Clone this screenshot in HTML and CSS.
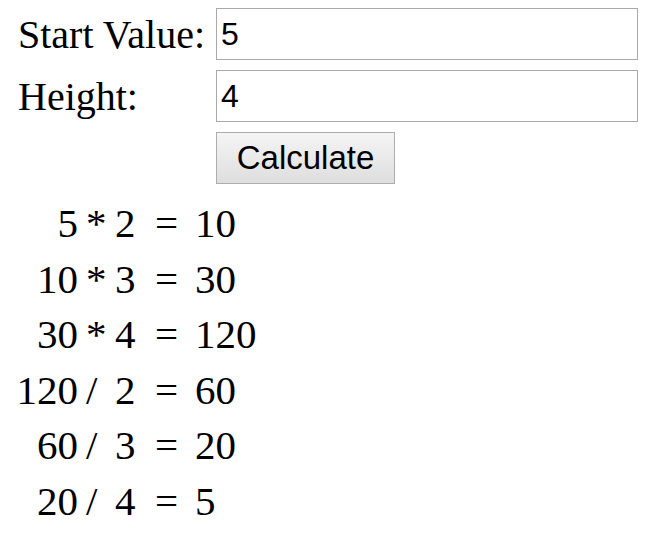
FILE: index.html
```html
<!DOCTYPE html>
<html>
<head>
<meta charset="utf-8">
<link rel="stylesheet" href="styles.css">
</head>
<body>
<form class="form">
  <label class="label" for="start">Start Value:</label>
  <input class="field" id="start" type="text" value="5">
  <label class="label" for="height">Height:</label>
  <input class="field" id="height" type="text" value="4">
  <button class="btn" type="button">Calculate</button>
</form>
<div class="results">
  <span class="a">5</span><span class="op">*</span><span class="b">2</span><span class="eq">=</span><span class="r">10</span>
  <span class="a">10</span><span class="op">*</span><span class="b">3</span><span class="eq">=</span><span class="r">30</span>
  <span class="a">30</span><span class="op">*</span><span class="b">4</span><span class="eq">=</span><span class="r">120</span>
  <span class="a">120</span><span class="op">/</span><span class="b">2</span><span class="eq">=</span><span class="r">60</span>
  <span class="a">60</span><span class="op">/</span><span class="b">3</span><span class="eq">=</span><span class="r">20</span>
  <span class="a">20</span><span class="op">/</span><span class="b">4</span><span class="eq">=</span><span class="r">5</span>
</div>
</body>
</html>
```

FILE: styles.css
```css
html, body {
  margin: 0;
  padding: 0;
  background: #ffffff;
  color: #000000;
  font-family: "Liberation Serif", "Times New Roman", serif;
}
.form {
  display: grid;
  grid-template-columns: 198px 422px;
  grid-auto-rows: 52px;
  row-gap: 10px;
  padding: 8px 0 0 18px;
  margin: 0;
}
.label {
  font-size: 40px;
  align-self: center;
  white-space: nowrap;
}
.field {
  box-sizing: border-box;
  height: 52px;
  width: 422px;
  margin: 0;
  border: 1px solid #a9a9a9;
  padding: 0 4px;
  font-family: "Liberation Sans", Arial, sans-serif;
  font-size: 32px;
  color: #000;
  background: #fff;
  outline: none;
}
.btn {
  grid-column: 2;
  box-sizing: border-box;
  width: 179px;
  height: 52px;
  margin: 0;
  padding: 0;
  border: 1px solid #adadad;
  border-radius: 0;
  background: linear-gradient(#f5f5f5, #dedede);
  font-family: "Liberation Sans", Arial, sans-serif;
  font-size: 33px;
  color: #000;
}
.results {
  display: grid;
  grid-template-columns: 86px 29px 40px 40px auto;
  grid-auto-rows: 55.6px;
  line-height: 55.6px;
  font-size: 41px;
  margin-top: 12px;
}
.a {
  text-align: right;
  padding-right: 8px;
}
```
